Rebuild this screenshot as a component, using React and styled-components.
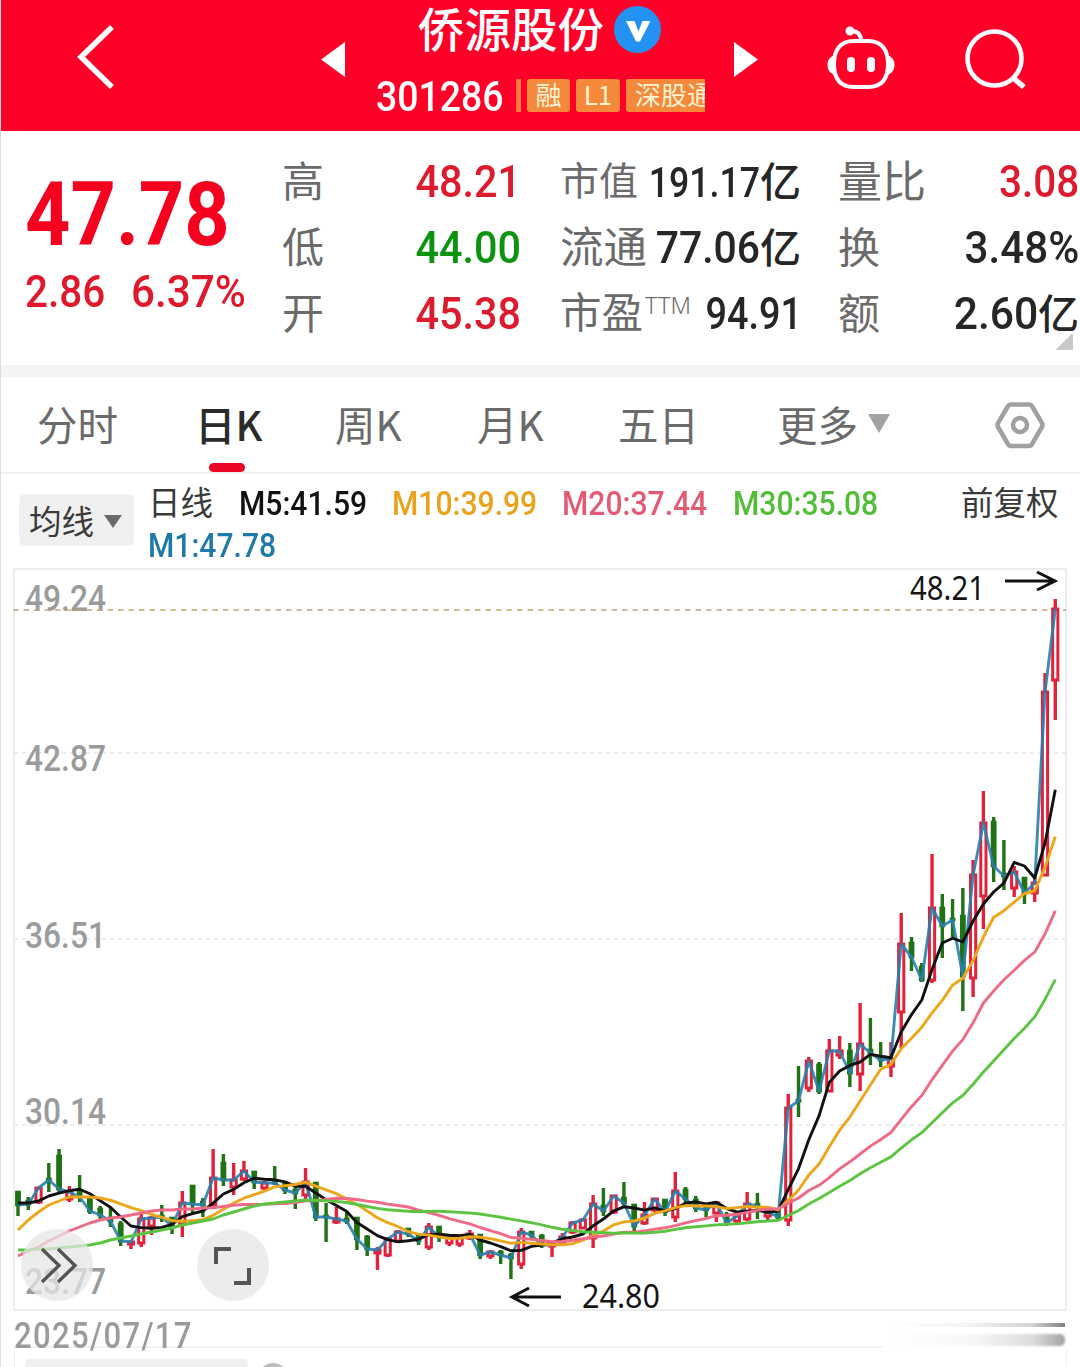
import React from 'react'
import styled, { createGlobalStyle } from 'styled-components'

const GlobalStyle = createGlobalStyle`
  * {
    box-sizing: border-box;
  }
  body {
    margin: 0;
    background: #fff;
  }
`

const Page = styled.main`
  width: 1080px;
  height: 1367px;
  overflow: hidden;
  background: #fff;
  border-left: 1px solid #dedede;
  font-family: 'Noto Sans CJK SC', sans-serif;
  line-height: 1;
  white-space: nowrap;
`

// condensed digits, $sx squeezes them horizontally
const Num = styled.span`
  display: block;
  flex: none;
  font-family: Roboto, sans-serif;
  font-size: ${props => props.$size}px;
  font-weight: ${props => props.$weight || 500};
  line-height: 1;
  color: ${props => props.$color || 'inherit'};
  letter-spacing: ${props => props.$spacing || 0}px;
  transform: scaleX(${props => props.$sx || 1});
  transform-origin: ${props => props.$origin || 'left'} center;
`

const Header = styled.header`
  display: flex;
  height: 131px;
  padding-left: 76px;
  margin-left: -1px;
  background: #ff0029;
  color: #fff;
  svg {
    display: block;
    flex: none;
  }
`

const BackIcon = styled.svg`
  width: 38px;
  height: 66px;
  margin: 24px 207px 0 0;
`

const Arrow = styled.svg`
  width: 24px;
  height: 36px;
  margin-top: 42px;
`

const Stock = styled.div`
  width: 329px;
  margin: 0 29px 0 31px;
`

const StockName = styled.div`
  display: flex;
  height: 68px;
  padding: 4px 0 0 42px;
  font-size: 46.5px;
  font-weight: 500;
`

const Verified = styled.svg`
  width: 47px;
  height: 47px;
  margin: 2px 0 0 10px;
`

const StockMeta = styled.div`
  display: flex;
  height: 44px;
  overflow: hidden;
`

const Code = styled.div`
  width: 140px;
  padding-top: 7px;
`

const Bar = styled.div`
  flex: none;
  width: 5px;
  height: 33px;
  margin: 11px 6px 0 0;
  background: #ff7a3a;
`

const Tag = styled.div`
  flex: none;
  width: ${props => props.$width}px;
  height: 33px;
  margin: 11px 6px 0 0;
  padding-top: 2px;
  border-radius: 3px;
  background: #f4893c;
  color: #fff3d2;
  font-size: 26px;
  text-align: center;
`

const RobotIcon = styled.svg`
  width: 72px;
  height: 66px;
  margin: 25px 0 0 67px;
`

const SearchIcon = styled.svg`
  width: 64px;
  height: 64px;
  margin: 28px 0 0 66px;
`

const Quote = styled.section`
  display: flex;
  height: 234px;
  padding: 17px 1px 0 24px;
`

const Price = styled.div`
  width: 257px;
  padding-top: 22px;
  color: #f5001f;
`

const Change = styled.div`
  display: flex;
  padding-top: 11px;
  color: #e0182c;
`

const Amount = styled.div`
  width: 106px;
`

const Column = styled.div`
  width: ${props => props.$width}px;
  margin-right: ${props => props.$gap || 0}px;
`

const Row = styled.div`
  display: flex;
  align-items: center;
  justify-content: space-between;
  height: 66px;
  color: ${props => props.$color || '#262626'};
  ${Num} {
    margin-top: 3px;
  }
`

const Label = styled.span`
  display: flex;
  margin-top: -5px;
  font-size: ${props => props.$size}px;
  color: #6b6b6b;
  sup {
    margin: 4px 0 0 2px;
    font-family: 'Noto Sans', sans-serif;
    font-size: 23.5px;
    font-weight: 300;
    line-height: 1;
  }
`

const Value = styled.div`
  display: flex;
  flex: none;
  align-items: center;
  justify-content: flex-end;
  margin-left: -14px;
  i {
    margin-top: -4px;
    font-size: 41px;
    font-style: normal;
    font-weight: 500;
  }
`

const Corner = styled.div`
  width: 17px;
  height: 17px;
  margin: -13px 6px 0 auto;
  background: linear-gradient(135deg, transparent 50%, #c9c9c9 50%);
`

const Divider = styled.div`
  height: 12px;
  background: #f4f4f4;
`

const Tabs = styled.nav`
  display: flex;
  height: 97px;
  padding-left: 36px;
  border-bottom: 2px solid #efefef;
`

const Tab = styled.div`
  width: ${props => props.$width}px;
  padding-top: 27px;
  font-size: 40.5px;
  font-weight: ${props => (props.$active ? 500 : 400)};
  color: ${props => (props.$active ? '#2b2b2b' : '#6a6a6a')};
  &::after {
    content: '';
    display: ${props => (props.$active ? 'block' : 'none')};
    width: 36px;
    height: 9px;
    margin: 18px 0 0 14px;
    border-radius: 5px;
    background: #ec0524;
  }
`

const Caret = styled.span`
  display: inline-block;
  width: ${props => props.$width}px;
  height: ${props => props.$height}px;
  margin-left: 10px;
  background: ${props => props.$color};
  clip-path: polygon(0 0, 100% 0, 50% 100%);
  vertical-align: ${props => props.$lift || 0}px;
`

const HexIcon = styled.svg`
  width: 50px;
  height: 48px;
  margin: 24px 0 0 -1px;
`

const Legend = styled.section`
  display: flex;
  height: 94px;
  padding-left: 18px;
`

const Indicator = styled.div`
  width: 115px;
  height: 52px;
  margin: 20px 14px 0 0;
  padding: 10px 0 0 10px;
  border-radius: 6px;
  background: #f0f0f0;
  color: #3a3a3a;
  font-size: 32.5px;
`

const Averages = styled.div`
  display: grid;
  grid-template-columns: 91px 153px 170px 171px 228px 100px;
  grid-template-rows: 42px 41px;
  align-items: center;
  padding-top: 8px;
  font-size: 32.5px;
  color: #3a3a3a;
`

const Word = styled.span`
  margin-top: -3px;
`

const ChartArea = styled.section`
  position: relative;
  height: 743px;
  margin-left: -1px;
  svg {
    display: block;
  }
`

const RoundButton = styled.div`
  position: absolute;
  top: 661px;
  left: ${props => props.$left}px;
  width: 72px;
  height: 72px;
  border-radius: 50%;
  background: rgba(230, 230, 230, 0.75);
`

const DateStrip = styled.div`
  display: flex;
  justify-content: space-between;
  height: 37px;
  margin: 0 13px;
  padding-top: 7px;
  border-bottom: 2px solid #f1f1f1;
`

const Smear = styled.div`
  width: 185px;
  height: 31px;
  margin-top: -1px;
  padding: 6px 2px 0 0;
  background: #fff;
  &::before,
  &::after {
    content: '';
    display: block;
    height: 4px;
    background: linear-gradient(90deg, #fff 5%, #f2f2f2 50%, #d2d2d2 82%, #808080);
    filter: blur(0.5px);
  }
  &::after {
    height: 12px;
    margin-top: 7px;
    border-radius: 0 5px 5px 0;
    background: linear-gradient(90deg, #fff 5%, #f7f7f7 50%, #dcdcdc 82%, #a2a2a2);
    filter: blur(1px);
  }
`

const Footer = styled.div`
  display: flex;
  height: 20px;
  margin: 0 13px;
  padding: 11px 0 0 10px;
  border: solid #efefef;
  border-width: 0 1px;
`

const Pill = styled.div`
  width: 223px;
  height: 30px;
  border-radius: 5px;
  background: #f0f0f0;
`

const Dot = styled.div`
  width: 30px;
  height: 30px;
  margin: 4px 0 0 10px;
  border-radius: 50%;
  background: #bdbdbd;
`

// open, close, high, low as chart y positions
const candles = [
  [1192, 1205, 1192, 1216], [1201, 1204, 1197, 1210], [1202, 1188, 1187, 1204],
  [1179, 1180, 1163, 1192], [1156, 1189, 1149, 1192], [1199, 1192, 1186, 1202],
  [1192, 1197, 1175, 1202], [1199, 1211, 1198, 1214], [1209, 1215, 1206, 1219],
  [1218, 1221, 1207, 1227], [1224, 1241, 1221, 1246], [1244, 1242, 1240, 1249],
  [1243, 1219, 1212, 1247], [1226, 1218, 1216, 1235], [1216, 1217, 1205, 1222],
  [1218, 1226, 1217, 1234], [1224, 1203, 1191, 1237], [1186, 1204, 1185, 1213],
  [1202, 1205, 1198, 1217], [1205, 1178, 1149, 1206], [1163, 1180, 1154, 1186],
  [1187, 1180, 1163, 1195], [1179, 1171, 1161, 1181], [1172, 1182, 1171, 1189],
  [1188, 1183, 1181, 1190], [1182, 1183, 1166, 1185], [1184, 1190, 1181, 1194],
  [1190, 1193, 1183, 1209], [1195, 1182, 1168, 1199], [1183, 1217, 1182, 1221],
  [1216, 1217, 1203, 1242], [1222, 1219, 1207, 1224], [1219, 1221, 1212, 1224],
  [1218, 1239, 1217, 1250], [1237, 1249, 1235, 1256], [1253, 1250, 1247, 1270],
  [1255, 1239, 1237, 1257], [1241, 1232, 1230, 1242], [1229, 1234, 1228, 1237],
  [1236, 1241, 1234, 1245], [1247, 1227, 1223, 1250], [1227, 1237, 1226, 1242],
  [1243, 1237, 1236, 1246], [1244, 1237, 1236, 1247], [1238, 1234, 1230, 1240],
  [1235, 1255, 1234, 1259], [1256, 1252, 1250, 1259], [1252, 1255, 1250, 1264],
  [1255, 1258, 1253, 1279], [1264, 1232, 1228, 1269], [1232, 1235, 1231, 1239],
  [1236, 1245, 1234, 1248], [1246, 1245, 1243, 1257], [1243, 1237, 1233, 1244],
  [1232, 1223, 1221, 1234], [1228, 1220, 1218, 1229], [1238, 1204, 1195, 1248],
  [1206, 1211, 1188, 1216], [1212, 1196, 1195, 1214], [1198, 1203, 1182, 1208],
  [1205, 1226, 1204, 1231], [1223, 1215, 1202, 1225], [1210, 1199, 1198, 1212],
  [1200, 1212, 1199, 1216], [1217, 1191, 1172, 1222], [1190, 1199, 1187, 1203],
  [1200, 1208, 1196, 1212], [1207, 1210, 1206, 1217], [1213, 1203, 1202, 1222],
  [1215, 1223, 1212, 1226], [1221, 1216, 1214, 1223], [1219, 1204, 1192, 1221],
  [1204, 1206, 1193, 1219], [1216, 1212, 1210, 1222], [1210, 1217, 1208, 1221],
  [1220, 1108, 1094, 1226], [1100, 1101, 1066, 1117], [1088, 1061, 1057, 1092],
  [1065, 1091, 1062, 1094], [1091, 1051, 1039, 1092], [1055, 1051, 1036, 1059],
  [1051, 1073, 1043, 1087], [1074, 1044, 1003, 1091], [1050, 1053, 1018, 1065],
  [1057, 1060, 1042, 1067], [1066, 1059, 1042, 1077], [1012, 944, 913, 1048],
  [943, 957, 937, 971], [967, 980, 963, 982], [980, 908, 854, 983],
  [908, 926, 894, 958], [919, 920, 899, 937], [916, 976, 888, 1011],
  [978, 875, 860, 997], [896, 823, 791, 929], [822, 866, 817, 882],
  [874, 876, 840, 890], [888, 872, 866, 897], [878, 893, 877, 904],
  [893, 883, 878, 902], [875, 692, 673, 876], [680, 609, 599, 720]
]

// average values that depend on days before the first candle
const lead = {
  5: [1203, 1203, 1201, 1196],
  10: [1230, 1220, 1212, 1205, 1201, 1197, 1197, 1197, 1198],
  20: [
    1256, 1251, 1247, 1241, 1236, 1231, 1227, 1223, 1220, 1218, 1217, 1215,
    1213, 1211, 1210, 1210, 1209, 1209, 1208
  ],
  30: [
    1250, 1250, 1249, 1249, 1248, 1247, 1246, 1245, 1243, 1240, 1238, 1236,
    1234, 1232, 1230, 1228, 1225, 1223, 1221, 1219, 1215, 1212, 1209, 1206,
    1204, 1203, 1202, 1201, 1200
  ]
}

const closes = candles.map(candle => candle[1])
const xAt = index => 18 + index * 10.27

const average = days =>
  closes.map((close, index) => {
    if (index < days - 1) return lead[days][index]
    const part = closes.slice(index - days + 1, index + 1)
    return part.reduce((sum, value) => sum + value, 0) / days
  })

const toPoints = values =>
  values.map((y, index) => `${xAt(index).toFixed(1)},${y.toFixed(1)}`).join(' ')

const lines = [
  { color: '#2a7fae', values: closes, opacity: 0.9 },
  { color: '#111', values: average(5) },
  { color: '#eda51a', values: average(10) },
  { color: '#ee6a86', values: average(20) },
  { color: '#5cc442', values: average(30) }
]

const axis = [
  ['49.24', 611],
  ['42.87', 771],
  ['36.51', 948],
  ['30.14', 1124],
  ['23.77', 1294]
]

const Candle = ({ index, data }) => {
  const [open, close, high, low] = data
  const x = xAt(index)
  const up = close < open
  const color = up ? '#e0233a' : '#1f7314'
  const top = Math.min(open, close)
  const bottom = Math.max(open, close)
  return (
    <g stroke={color} strokeWidth="3.4">
      <path d={`M${x} ${high}V${top}M${x} ${bottom}V${low}`} />
      <rect
        x={x - (up ? 2.6 : 1.6)}
        y={top}
        width={up ? 5.2 : 3.2}
        height={Math.max(bottom - top, 1)}
        fill={up ? '#fff' : color}
        strokeWidth={up ? 3 : 2.6}
      />
    </g>
  )
}

const Chart = () => (
  <svg width="1080" height="743" viewBox="0 568 1080 743" fill="none">
    <rect x="14" y="569" width="1052" height="741" stroke="#ededed" strokeWidth="2" />
    {[753, 939, 1125].map(y => (
      <path key={y} d={`M14 ${y}H1066`} stroke="#e8e8e8" strokeWidth="1.5" strokeDasharray="4 4" />
    ))}
    <g fontFamily="Roboto, sans-serif" fontSize="36" fontWeight="500" fill="#9b9b9b">
      {axis.map(([label, y]) => (
        <text key={label} x="25" y={y} textLength="81" lengthAdjust="spacingAndGlyphs">
          {label}
        </text>
      ))}
    </g>
    <path d="M13 610H1066" stroke="#c2a476" strokeWidth="1.6" strokeDasharray="5.5 5" />
    {candles.map((data, index) => (
      <Candle key={index} index={index} data={data} />
    ))}
    {lines.map(({ color, values, opacity = 1 }) => (
      <polyline
        key={color}
        points={toPoints(values)}
        stroke={color}
        strokeWidth="2.9"
        strokeLinejoin="round"
        strokeOpacity={opacity}
      />
    ))}
    <g stroke="#111" strokeWidth="3">
      <path d="M1005 581H1055M1037 572L1055 581L1037 590" />
      <path d="M561 1297H512M529 1288L512 1297L529 1306" />
    </g>
    <g fontFamily="'Noto Sans', sans-serif" fontSize="32.5" fill="#151515">
      <text x="910" y="600" textLength="75" lengthAdjust="spacingAndGlyphs">48.21</text>
      <text x="582" y="1308" textLength="78" lengthAdjust="spacingAndGlyphs">24.80</text>
    </g>
  </svg>
)

const App = () => (
  <>
    <GlobalStyle />
    <Page>
      <Header>
        <BackIcon viewBox="0 0 38 66" fill="none" stroke="#fff" strokeWidth="5.5">
          <path d="M36 3L5 33L36 63" />
        </BackIcon>
        <Arrow viewBox="0 0 24 36" fill="#fff">
          <path d="M24 0V35L0 17.5Z" />
        </Arrow>
        <Stock>
          <StockName>
            侨源股份
            <Verified viewBox="0 0 47 47">
              <circle cx="23.5" cy="23.5" r="23.5" fill="#2492f2" />
              <path d="M12 15H20.500L24.5 25.500L28.500 15H36.500L26 35.5H22Z" fill="#fff" />
            </Verified>
          </StockName>
          <StockMeta>
            <Code>
              <Num $size={43} $sx={0.87}>301286</Num>
            </Code>
            <Bar />
            <Tag $width={43}>融</Tag>
            <Tag $width={44}>L1</Tag>
            <Tag $width={96}>深股通</Tag>
          </StockMeta>
        </Stock>
        <Arrow viewBox="0 0 24 36" fill="#fff">
          <path d="M0 0V35L24 17.5Z" />
        </Arrow>
        <RobotIcon viewBox="0 0 72 66" fill="none" stroke="#fff" strokeWidth="4">
          <path d="M29 16H43C57 16 63 25 63 39C63 54 57 62 43 62H29C15 62 9 54 9 39C9 25 15 16 29 16Z" />
          <path d="M36 16C36 10 33 6 26 6" />
          <circle cx="25" cy="6" r="2.5" fill="#fff" />
          <path d="M8 32C2 35 2 45 8 48ZM64 32C70 35 70 45 64 48Z" fill="#fff" strokeWidth="2" />
          <path d="M26 36V43M46 36V43" strokeWidth="8" strokeLinecap="round" />
        </RobotIcon>
        <SearchIcon viewBox="0 0 64 64" fill="none" stroke="#fff" strokeWidth="4.6">
          <circle cx="31.5" cy="30.5" r="27" />
          <path d="M49 49L61 59" strokeWidth="5.5" />
        </SearchIcon>
      </Header>

      <Quote>
        <Price>
          <Num $size={89} $sx={0.89} $weight={700}>47.78</Num>
          <Change>
            <Amount>
              <Num $size={44} $sx={0.92}>2.86</Num>
            </Amount>
            <Num $size={44} $sx={0.96}>6.37%</Num>
          </Change>
        </Price>
        <Column $width={239} $gap={39}>
          <Row $color="#dc1c2e">
            <Label $size={42}>高</Label>
            <Num $size={43.5} $sx={0.95} $origin="right">48.21</Num>
          </Row>
          <Row $color="#0c930f">
            <Label $size={42}>低</Label>
            <Num $size={43.5} $sx={0.95} $origin="right">44.00</Num>
          </Row>
          <Row $color="#dc1c2e">
            <Label $size={42}>开</Label>
            <Num $size={43.5} $sx={0.95} $origin="right">45.38</Num>
          </Row>
        </Column>
        <Column $width={241} $gap={37}>
          <Row>
            <Label $size={39}>市值</Label>
            <Value>
              <Num $size={42} $sx={0.85} $origin="right">191.17</Num>
              <i>亿</i>
            </Value>
          </Row>
          <Row>
            <Label $size={43.5}>流通</Label>
            <Value>
              <Num $size={43.5} $sx={0.94} $origin="right">77.06</Num>
              <i>亿</i>
            </Value>
          </Row>
          <Row>
            <Label $size={41.5}>
              市盈<sup>TTM</sup>
            </Label>
            <Num $size={43.5} $sx={0.87} $origin="right">94.91</Num>
          </Row>
        </Column>
        <Column $width={241}>
          <Row>
            <Label $size={44}>量比</Label>
            <Num $size={43.5} $sx={0.93} $origin="right" $color="#dc1c2e">3.08</Num>
          </Row>
          <Row>
            <Label $size={42}>换</Label>
            <Num $size={43.5} $sx={0.97} $origin="right">3.48%</Num>
          </Row>
          <Row>
            <Label $size={42}>额</Label>
            <Value>
              <Num $size={43.5} $sx={0.98} $origin="right">2.60</Num>
              <i>亿</i>
            </Value>
          </Row>
          <Corner />
        </Column>
      </Quote>

      <Divider />

      <Tabs>
        <Tab $width={158}>分时</Tab>
        <Tab $width={140} $active>日K</Tab>
        <Tab $width={142}>周K</Tab>
        <Tab $width={141}>月K</Tab>
        <Tab $width={159}>五日</Tab>
        <Tab $width={219}>
          更多
          <Caret $width={22} $height={19} $color="#a3a3a3" $lift={8} />
        </Tab>
        <HexIcon viewBox="0 0 50 48" fill="none" stroke="#a0a0a0" strokeWidth="4.5">
          <path d="M16 3.500H34Q36 3.500 37 5L47 22Q48 24 47 26L37 43Q36 45 34 45H16Q14 45 13 43L3 26Q2 24 3 22L13 5Q14 3.500 16 3.500Z" />
          <circle cx="25" cy="24" r="7" />
        </HexIcon>
      </Tabs>

      <Legend>
        <Indicator>
          均线
          <Caret $width={18} $height={13} $color="#6a6a6a" $lift={6} />
        </Indicator>
        <Averages>
          <Word>日线</Word>
          <Num $size={34} $sx={0.885} $color="#111">M5:41.59</Num>
          <Num $size={34} $sx={0.885} $color="#e9a21b">M10:39.99</Num>
          <Num $size={34} $sx={0.885} $color="#e35a74">M20:37.44</Num>
          <Num $size={34} $sx={0.885} $color="#52bd38">M30:35.08</Num>
          <Word>前复权</Word>
          <Num $size={34} $sx={0.885} $color="#1d79a8">M1:47.78</Num>
        </Averages>
      </Legend>

      <ChartArea>
        <Chart />
        <RoundButton $left={21}>
          <svg width="72" height="72" fill="none" stroke="#555" strokeWidth="3.4">
            <path d="M21 20L38 36.500L21 53M37 20L54 36.500L37 53" />
          </svg>
        </RoundButton>
        <RoundButton $left={197}>
          <svg width="72" height="72" fill="none" stroke="#555" strokeWidth="4">
            <path d="M19 35V20H34M37 54H52V39" />
          </svg>
        </RoundButton>
      </ChartArea>

      <DateStrip>
        <Num $size={36} $sx={0.865} $spacing={1.5} $color="#9b9b9b">2025/07/17</Num>
        <Smear />
      </DateStrip>
      <Footer>
        <Pill />
        <Dot />
      </Footer>
    </Page>
  </>
)

export default App
